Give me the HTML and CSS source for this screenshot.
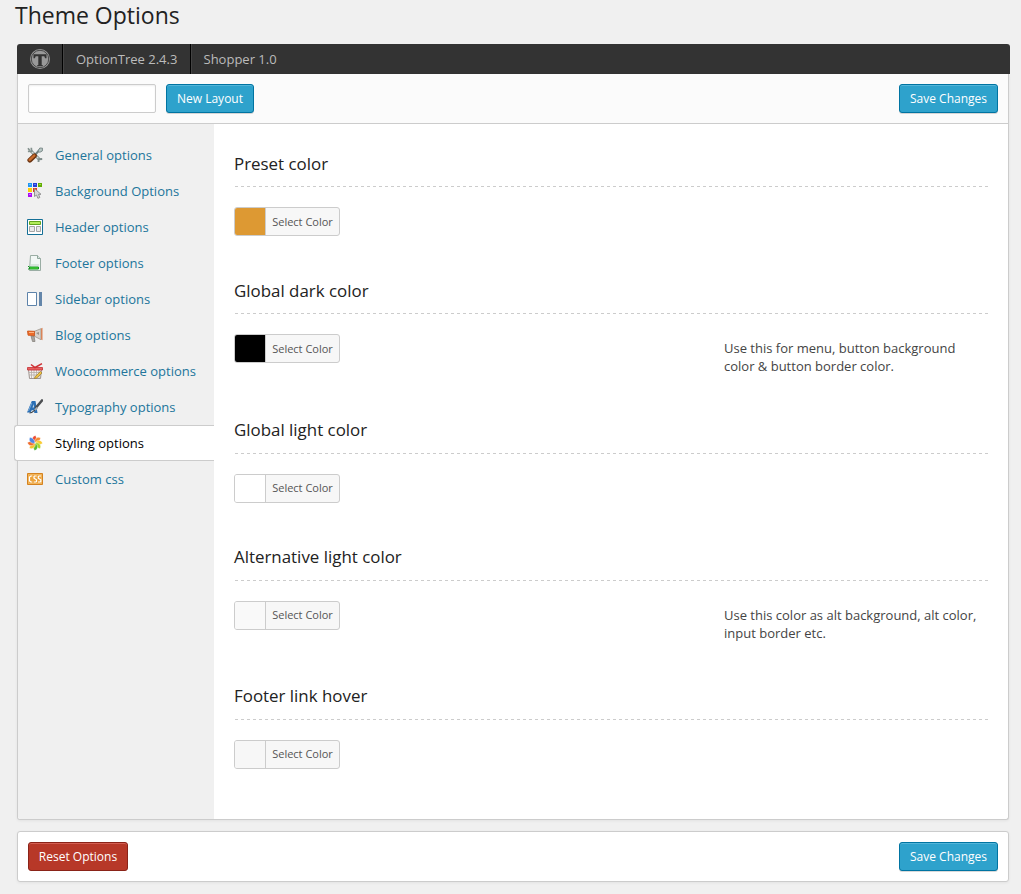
FILE: index.html
```html
<!DOCTYPE html>
<html lang="en">
<head>
<meta charset="utf-8">
<title>Theme Options</title>
<link rel="stylesheet" href="styles.css">
</head>
<body>
<h1 class="page-title">Theme Options</h1>
<main class="wrap">
  <header class="topbar">
    <span class="brand"><svg width="22" height="22" viewBox="0 0 22 22"><circle cx="11" cy="11" r="10" fill="#999"/><circle cx="11" cy="11" r="8.700" fill="none" stroke="#333" stroke-width=".8"/><path d="M4.500 6.200h13v4h-1.400l-.8-1.900h-2.600v8.600h1v1.400H8.300v-1.400h1V8.300H6.700l-.8 1.900H4.500z" fill="#333"/></svg></span>
    <span class="topitem version">OptionTree 2.4.3</span>
    <span class="topitem theme">Shopper 1.0</span>
  </header>
  <div class="panel">
    <div class="toolbar">
      <input class="layout-name" type="text" aria-label="Layout name">
      <button class="btn primary new">New Layout</button>
      <button class="btn primary save">Save Changes</button>
    </div>
    <div class="body">
      <nav class="side">
        <a class="item"><svg class="ico" viewBox="0 0 16 16"><path d="M3.500 3.500l9 9" stroke="#7e8c8a" stroke-width="3"/><path d="M3.500 3.500l9 9" stroke="#d5dddb" stroke-width="1.200"/><path d="M1 1.200l1.700 2.200M4.300.8l.3 3.500-3.700.2" fill="none" stroke="#84928f" stroke-width="1.700"/><path d="M11.500 15l.2-2.800 3.500-.2" fill="none" stroke="#7e8c8a" stroke-width="1.900"/><path d="M7 9l5.500-6" stroke="#708080" stroke-width="2"/><path d="M11 4l1.800-3 2.700.2-.2 2.800-2.500 1.300z" fill="#b9c8c6" stroke="#758583" stroke-width=".9"/><path d="M2.800 13.200l4.700-4.400" stroke="#6b3512" stroke-width="4.800" stroke-linecap="round"/><path d="M2.700 12.900l4.500-4.200" stroke="#c96b2d" stroke-width="2.500" stroke-linecap="round"/></svg>General options</a>
        <a class="item"><svg class="ico" viewBox="0 0 16 16"><path d="M1 0h4v4H1z" fill="#2196f3"/><path d="M6 0h4v4H6z" fill="#2540d8"/><path d="M11 0h4v4h-4z" fill="#62ad05"/><path d="M1 5h4v4H1z" fill="#fbcf08"/><path d="M6 5h4v4H6z" fill="#e8341c"/><path d="M1 10h4v4H1z" fill="#a90df0"/><path d="M2 1h2v1H2z" fill="#5bc5ff"/><path d="M7 1h2v1H7z" fill="#5878ff"/><path d="M12 1h2v1h-2z" fill="#9cdb42"/><path d="M2 11h2v1H2z" fill="#d766ff"/><path d="M7.500 5.500v8l2-1.500 1.400 3.300 1.900-.8-1.300-3.200h2.500z" fill="#d6d6d6" stroke="#8a8a8a" stroke-width=".9"/></svg>Background Options</a>
        <a class="item"><svg class="ico" viewBox="0 0 16 16"><path d="M.5.500h15v15H.5z" fill="#fff" stroke="#146f96"/><path d="M2.500 2.500h11v3h-11z" fill="#b2ec59" stroke="#62a51c"/><path d="M2.500 7.500h5v5h-5zM9.500 7.500h4v5h-4z" fill="#e9e9e9" stroke="#a5a5a5"/></svg>Header options</a>
        <a class="item"><svg class="ico" viewBox="0 0 16 16"><path d="M3.500.5h7l3 3v12h-11z" fill="#f2f7f5" stroke="#9aada4"/><path d="M10.500.5v3h3" fill="#dce6e1" stroke="#8fa69b"/><path d="M4 10h8" stroke="#c1d1c8"/><path d="M2.500 12h9v2h-9z" fill="#52e33f" stroke="#149621"/><path d="M1.500 11v1M1.500 13.500v1" stroke="#149621"/></svg>Footer options</a>
        <a class="item"><svg class="ico" viewBox="0 0 16 16"><path d="M.5 1.500h9v13h-9z" fill="#fff" stroke="#5d83aa"/><path d="M12 1h3v14h-3z" fill="#6486aa"/></svg>Sidebar options</a>
        <a class="item"><svg class="ico" viewBox="0 0 16 16"><path d="M4 9l1.500 5.500H8L7 9z" fill="#aaa59f" stroke="#88847f" stroke-width=".8"/><path d="M7 4.500l7-2.800v11L7 9z" fill="#d8d2cb" stroke="#9d958c" stroke-width=".8"/><path d="M.5 4l7 .3v4.500l-6.500-.6z" fill="#ed6b27" stroke="#c7551d" stroke-width=".8"/><path d="M2 5.500h5" stroke="#ffb27e"/><path d="M14 1.500l1.500-.7v12.400l-1.500-.8z" fill="#d98459"/><path d="M9 6l3-1v3z" fill="#9a928b"/></svg>Blog options</a>
        <a class="item"><svg class="ico" viewBox="0 0 16 16"><path d="M1.500 6.500h13l-1 9h-11z" fill="#f4f0ee" stroke="#948985" stroke-width=".9"/><path d="M4.500 7v8M7 7v8M9.500 7v8M12 7v8M2 9.500h12M2 12h11.500" stroke="#b5aca6" stroke-width=".8"/><path d="M.5 4.500h15v2.500H.5z" fill="#e66362" stroke="#c52f33" stroke-width=".8"/><path d="M4 1.500l4 3 7-3.800" fill="none" stroke="#ce3034" stroke-width="1.500"/><path d="M8 13.800l5.500-5.300 1.500 1.500-5.200 5-2.300.5z" fill="#f0c344" stroke="#997826" stroke-width=".7"/></svg>Woocommerce options</a>
        <a class="item"><svg class="ico" viewBox="0 0 16 16"><path d="M0 13.500L4.800 2h3.700l2 12H7.300L7 11.200H4.700l-1.200 2.300z" fill="#2b6fb4"/><path d="M5.500 8.500h1.400L6.700 5z" fill="#dce8f2"/><path d="M1.500 12l3.300-8" stroke="#74a7d7"/><path d="M9 8.500l6-7" stroke="#4c4f52" stroke-width="2.600" stroke-linecap="round"/><path d="M7 11l2.500-3 1.500 1.200-2.300 2.400z" fill="#aaa"/><path d="M2.500 14q2.500 0 5.300-2.800" fill="none" stroke="#3b444d" stroke-width="1.200"/></svg>Typography options</a>
        <a class="item active"><svg class="ico" viewBox="0 0 16 16"><g stroke="#fff" stroke-width=".4"><path d="M8 8C4 6 5 1 8.500.5 9 2 11 4 8 8z" fill="#ed4a31"/><path d="M8 8C4 6 5 1 8.500.5 9 2 11 4 8 8z" transform="rotate(45 8 8)" fill="#f58b35"/><path d="M8 8C4 6 5 1 8.500.5 9 2 11 4 8 8z" transform="rotate(90 8 8)" fill="#facb2f"/><path d="M8 8C4 6 5 1 8.500.5 9 2 11 4 8 8z" transform="rotate(135 8 8)" fill="#a9d62a"/><path d="M8 8C4 6 5 1 8.500.5 9 2 11 4 8 8z" transform="rotate(180 8 8)" fill="#56ba37"/><path d="M8 8C4 6 5 1 8.500.5 9 2 11 4 8 8z" transform="rotate(225 8 8)" fill="#f3c52f"/><path d="M8 8C4 6 5 1 8.500.5 9 2 11 4 8 8z" transform="rotate(270 8 8)" fill="#ef6d2e"/><path d="M8 8C4 6 5 1 8.500.5 9 2 11 4 8 8z" transform="rotate(315 8 8)" fill="#4e86e5"/></g></svg>Styling options</a>
        <a class="item"><svg class="ico" viewBox="0 0 16 16"><path d="M.5 2.500h15v11H.5z" fill="#eda33b" stroke="#d48220"/><path d="M1.500 3.500h13v9h-13z" fill="none" stroke="#f4bd68" stroke-width=".7"/><path d="M5.300 5h-1.500L2.500 6v4l1.300 1h1.500M9.700 5H7.600L7 5.600v1.600L9.500 8.800v1.600l-.6.6H6.700M14 5h-2.100l-.6.6v1.600l2.500 1.600v1.600l-.6.6H11" fill="none" stroke="#fff" stroke-width="1.200"/></svg>Custom css</a>
      </nav>
      <div class="content">
        <section class="option"><h2>Preset color</h2><div class="row"><button class="picker"><i class="swatch gold"></i><span>Select Color</span></button></div></section>
        <section class="option tall"><h2>Global dark color</h2><div class="row"><button class="picker"><i class="swatch black"></i><span>Select Color</span></button><p>Use this for menu, button background color &amp; button border color.</p></div></section>
        <section class="option raised"><h2>Global light color</h2><div class="row"><button class="picker"><i class="swatch white"></i><span>Select Color</span></button></div></section>
        <section class="option mid raised"><h2>Alternative light color</h2><div class="row"><button class="picker"><i class="swatch light"></i><span>Select Color</span></button><p>Use this color as alt background, alt color, input border etc.</p></div></section>
        <section class="option raised"><h2>Footer link hover</h2><div class="row"><button class="picker"><i class="swatch gray"></i><span>Select Color</span></button></div></section>
      </div>
    </div>
  </div>
  <footer class="bottom">
    <button class="btn danger">Reset Options</button>
    <button class="btn primary save">Save Changes</button>
  </footer>
</main>
</body>
</html>
```
FILE: styles.css
```css
* { box-sizing: border-box; }
body {
  margin: 0;
  height: 894px;
  overflow: hidden;
  background: #f0f0f0;
  color: #444;
  font: 13px/18px "Open Sans", sans-serif;
}
.page-title {
  margin: 0;
  height: 44px;
  padding-left: 15px;
  font-size: 23px;
  line-height: 31px;
  font-weight: 400;
  color: #222;
}
.wrap { margin: 0 12px 0 17px; width: 992px; }
.topbar {
  display: flex;
  width: 993px;
  height: 30px;
  background: #333;
  border-radius: 3px 3px 0 0;
  color: #bbb;
  line-height: 30px;
}
.brand {
  width: 46px;
  padding: 4px 0 0 12px;
  border-right: 1px solid #000;
  line-height: 0;
}
.topitem { padding-left: 12px; border-left: 1px solid #444; }
.version { width: 128px; border-right: 1px solid #000; }
.theme { padding-left: 11.5px; }
.panel {
  height: 746px;
  border: 1px solid #ccc;
  border-top: 0;
  border-radius: 0 0 3px 3px;
  background: #fff;
  box-shadow: 0 1px 3px rgba(0, 0, 0, .06);
}
.toolbar {
  display: flex;
  height: 50px;
  padding: 10px;
  background: #fbfbfb;
  border-bottom: 1px solid #ccc;
}
.layout-name {
  width: 128px;
  height: 29px;
  margin-right: 10px;
  border: 1px solid #ccc;
  border-radius: 2px;
  background: #fff;
  box-shadow: inset 0 1px 2px rgba(0, 0, 0, .07);
}
.btn {
  height: 29px;
  padding: 0;
  border: 1px solid;
  border-radius: 3px;
  color: #fff;
  font: 12px/27px "Open Sans", sans-serif;
}
.primary {
  background: #2ea2cc;
  border-color: #0074a2;
  box-shadow: inset 0 1px 0 rgba(120, 200, 230, .5), 0 1px 0 rgba(0, 0, 0, .15);
}
.new { width: 88px; }
.save { width: 99px; margin-left: auto; }
.danger {
  width: 100px;
  background: #b73828;
  border-color: #8a2318;
  box-shadow: inset 0 1px 0 rgba(230, 120, 110, .6);
}
.body { display: flex; height: 695px; }
.side {
  width: 196px;
  padding-top: 13px;
  background: #f0f0f0;
  border-radius: 0 0 0 3px;
}
.item {
  display: flex;
  align-items: center;
  height: 36px;
  padding-left: 9px;
  gap: 12px;
  color: #21759b;
  white-space: nowrap;
}
.ico { width: 16px; height: 16px; flex: none; }
.active {
  margin-left: -4px;
  padding-left: 12px;
  background: #fff;
  border: 1px solid #ccc;
  border-right: 0;
  border-radius: 3px 0 0 3px;
  color: #000;
}
.content { flex: 1; padding: 20px 20px 0; }
.option { height: 127px; }
.tall { height: 140px; }
.mid { height: 139px; }
.option h2 {
  margin: 0;
  height: 43px;
  font-size: 16.9px;
  line-height: 39px;
  font-weight: 400;
  color: #222;
  background: repeating-linear-gradient(90deg, transparent 0 1px, #ccc 1px 4px, transparent 4px 6px) left bottom / 100% 1px no-repeat;
}
.raised h2 { line-height: 37px; }
.row { display: flex; justify-content: space-between; padding-top: 20px; }
.row p { width: 264px; margin: 5px 0 0; }
.picker {
  display: flex;
  width: 106px;
  height: 29px;
  padding: 0;
  overflow: hidden;
  border: 1px solid #ccc;
  border-radius: 3px;
  background: #f7f7f7;
  color: #555;
  font: 11px/27px "Open Sans", sans-serif;
}
.picker span { flex: 1; height: 27px; border-left: 1px solid #ccc; text-align: center; }
.raised .picker { line-height: 25px; }
.swatch { width: 30px; height: 27px; }
.gold { background: #dd9933; }
.black { background: #000; }
.white { background: #fff; }
.light { background: #f9f9f9; }
.gray { background: #f7f7f7; }
.bottom {
  display: flex;
  height: 51px;
  margin-top: 11px;
  padding: 10px;
  border: 1px solid #ccc;
  border-radius: 3px;
  background: #fff;
  box-shadow: 0 1px 3px rgba(0, 0, 0, .06);
}
```
